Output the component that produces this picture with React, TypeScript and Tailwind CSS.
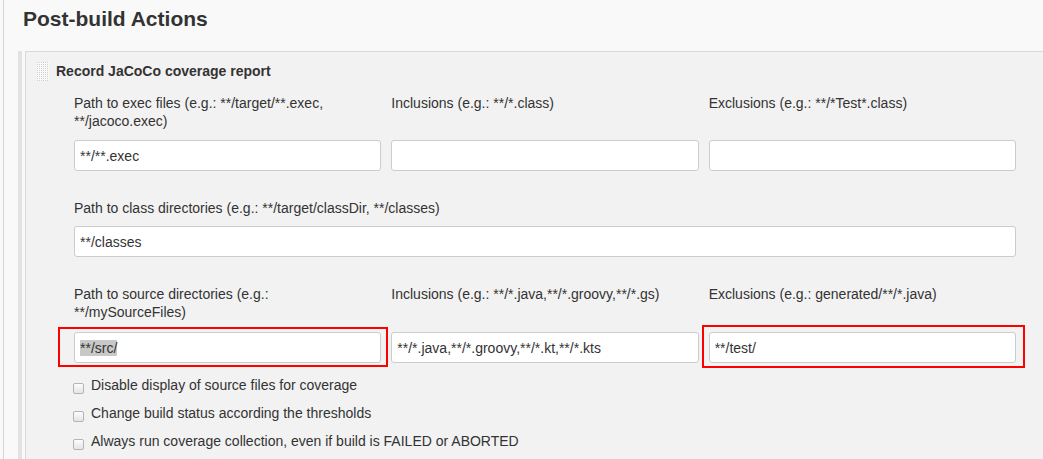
import React from "react";

const Grip = () => (
  <svg width="12" height="19" viewBox="0 0 12 19" className="shrink-0">
    <defs>
      <pattern id="dots" width="2" height="2" patternUnits="userSpaceOnUse">
        <rect width="2" height="2" fill="#fafafa" />
        <rect width="1" height="1" fill="#cfcfcf" />
      </pattern>
    </defs>
    <rect width="12" height="19" fill="url(#dots)" />
  </svg>
);

const Field = ({ value, selected }: { value?: string; selected?: boolean }) =>
  selected ? (
    <div className="h-[31px] flex items-center rounded-[3px] border border-[#cccccc] bg-white pl-[5px] text-[14px] text-[#333]">
      <span className="bg-[#c8c8c8] leading-[16px]">{value}</span>
    </div>
  ) : (
    <input
      readOnly
      defaultValue={value}
      className="h-[31px] w-full rounded-[3px] border border-[#cccccc] bg-white pl-[5px] text-[14px] text-[#333] outline-none"
    />
  );

const Check = ({ label }: { label: string }) => (
  <div className="flex items-start leading-[18px]">
    <span className="mt-[7px] ml-[-1px] h-[11px] w-[11px] shrink-0 rounded-[2px] border border-[#b4b4b4] bg-gradient-to-b from-[#fdfdfd] to-[#e4e4e4]" />
    <span className="ml-[7px] text-[14px]">{label}</span>
  </div>
);

export default function App() {
  return (
    <div className="min-h-screen bg-[#f9f9f9] font-['Liberation_Sans',Arial,sans-serif] text-[#333]">
      <div className="ml-[3px] min-h-screen border-l border-[#d4d4d4] pl-[14px] pt-[6px]">
        <h2 className="ml-[5px] mb-[20px] text-[21px] font-bold leading-[25px]">Post-build Actions</h2>

        <div className="flex">
          <div className="w-[4px] shrink-0 bg-[#e2e2e2]" />
          <div className="ml-[3px] flex-1 border-l border-t border-[#d9d9d9] bg-[#f2f2f2] pl-[48px] pr-[27px] pt-[10px] pb-[10px]">
            {/* section title */}
            <div className="-ml-[37px] flex items-start gap-[7px]">
              <Grip />
              <div className="text-[14px] font-bold leading-[18px]">Record JaCoCo coverage report</div>
            </div>

            <div className="mt-[13px] grid grid-cols-3 gap-x-[10px] gap-y-[10px] text-[14px] leading-[18px]">
              <div>Path to exec files (e.g.: **/target/**.exec, **/jacoco.exec)</div>
              <div>Inclusions (e.g.: **/*.class)</div>
              <div>Exclusions (e.g.: **/*Test*.class)</div>
              <Field value="**/**.exec" />
              <Field />
              <Field />
            </div>

            <div className="mt-[28px] flex flex-col gap-[9px] text-[14px] leading-[18px]">
              <div>Path to class directories (e.g.: **/target/classDir, **/classes)</div>
              <Field value="**/classes" />
            </div>

            <div className="mt-[28px] grid grid-cols-3 gap-x-[10px] gap-y-[11px] text-[14px] leading-[18px]">
              <div className="pr-[40px]">Path to source directories (e.g.: **/mySourceFiles)</div>
              <div>Inclusions (e.g.: **/*.java,**/*.groovy,**/*.gs)</div>
              <div>Exclusions (e.g.: generated/**/*.java)</div>
              <div className="relative">
                <Field value="**/src/" selected />
                <div className="pointer-events-none absolute -left-[16px] -right-[7px] -top-[5px] -bottom-[4px] border-2 border-[#ff0000]" />
              </div>
              <Field value="**/*.java,**/*.groovy,**/*.kt,**/*.kts" />
              <div className="relative">
                <Field value="**/test/" />
                <div className="pointer-events-none absolute -left-[7px] -right-[9px] -top-[7px] -bottom-[5px] border-2 border-[#ff0000]" />
              </div>
            </div>

            <div className="mt-[13px] flex flex-col gap-[10px]">
              <Check label="Disable display of source files for coverage" />
              <Check label="Change build status according the thresholds" />
              <Check label="Always run coverage collection, even if build is FAILED or ABORTED" />
            </div>
          </div>
        </div>
      </div>
    </div>
  );
}
